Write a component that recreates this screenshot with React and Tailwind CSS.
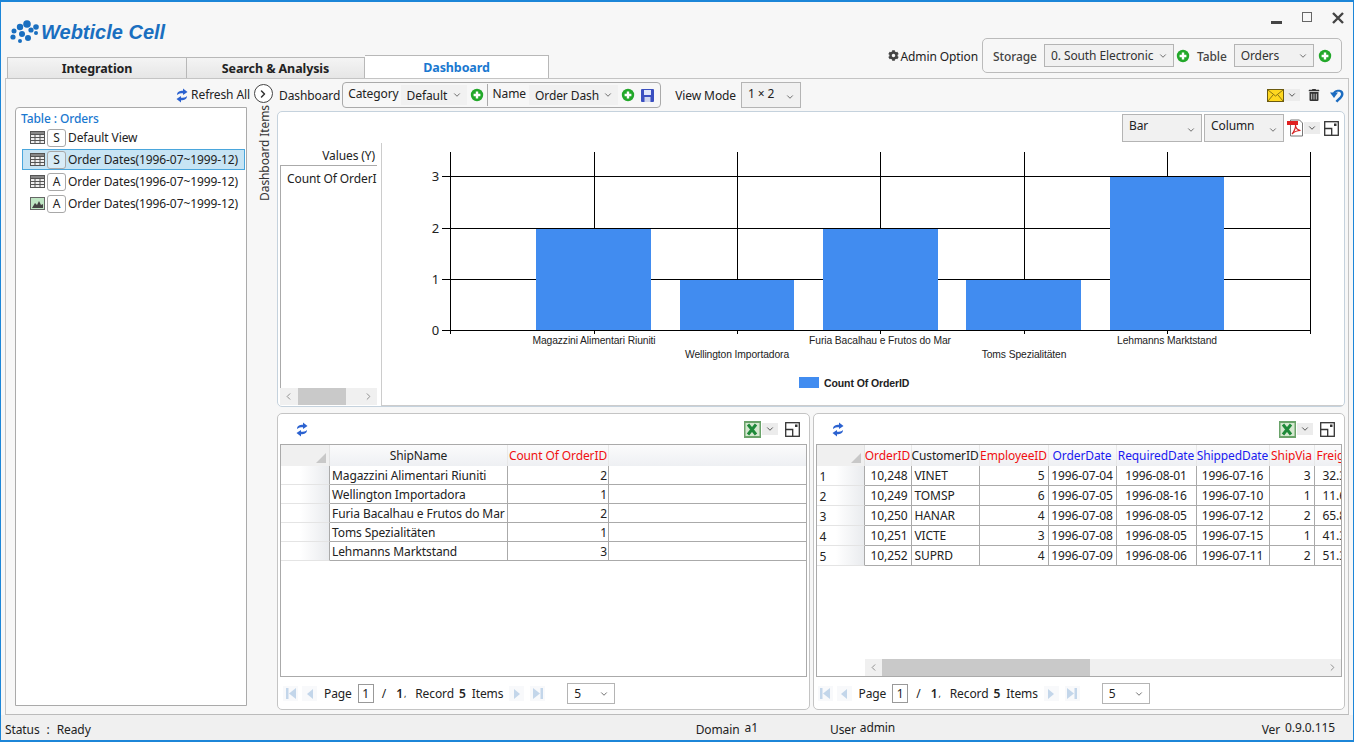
import React from "react";
import { FaCog, FaTrashAlt } from "react-icons/fa";
import { ChevronDown, ChevronRight, ChevronLeft } from "lucide-react";

const treeItems = [
    { icon: "table", badge: "S", label: "Default View" },
    { icon: "table", badge: "S", label: "Order Dates(1996-07~1999-12)", selected: true },
    { icon: "table", badge: "A", label: "Order Dates(1996-07~1999-12)" },
    { icon: "chart", badge: "A", label: "Order Dates(1996-07~1999-12)" },
];

const shipRows = [
    ["Magazzini Alimentari Riuniti", "2"],
    ["Wellington Importadora", "1"],
    ["Furia Bacalhau e Frutos do Mar", "2"],
    ["Toms Spezialitäten", "1"],
    ["Lehmanns Marktstand", "3"],
];

const orderRows = [
    ["1", "10,248", "VINET", "5", "1996-07-04", "1996-08-01", "1996-07-16", "3", "32.38"],
    ["2", "10,249", "TOMSP", "6", "1996-07-05", "1996-08-16", "1996-07-10", "1", "11.61"],
    ["3", "10,250", "HANAR", "4", "1996-07-08", "1996-08-05", "1996-07-12", "2", "65.83"],
    ["4", "10,251", "VICTE", "3", "1996-07-08", "1996-08-05", "1996-07-15", "1", "41.34"],
    ["5", "10,252", "SUPRD", "4", "1996-07-09", "1996-08-06", "1996-07-11", "2", "51.30"],
];

const orderCols = [
    { name: "OrderID", color: "text-[#f01010]" },
    { name: "CustomerID", color: "text-[#222]" },
    { name: "EmployeeID", color: "text-[#f01010]" },
    { name: "OrderDate", color: "text-[#1a1af0]" },
    { name: "RequiredDate", color: "text-[#1a1af0]" },
    { name: "ShippedDate", color: "text-[#1a1af0]" },
    { name: "ShipVia", color: "text-[#f01010]" },
];

const bars = [
    { x: 536, w: 115, y: 228, label: "Magazzini Alimentari Riuniti", cx: 594, ly: 344 },
    { x: 680, w: 114, y: 279, label: "Wellington Importadora", cx: 737, ly: 358 },
    { x: 823, w: 115, y: 228, label: "Furia Bacalhau e Frutos do Mar", cx: 880, ly: 344 },
    { x: 966, w: 115, y: 279, label: "Toms Spezialitäten", cx: 1024, ly: 358 },
    { x: 1110, w: 114, y: 176, label: "Lehmanns Marktstand", cx: 1167, ly: 344 },
];

function PlusIcon() {
    return (
        <svg width="14" height="14" viewBox="0 0 14 14" className="shrink-0">
            <circle cx="7" cy="7" r="6.2" fill="#22a82a" />
            <path d="M7 3.6v6.8M3.6 7h6.8" stroke="#fff" strokeWidth="2.4" />
        </svg>
    );
}

function Refresh() {
    return (
        <svg width="12" height="15" viewBox="0 0 12 15" className="shrink-0" fill="#2b62d0">
            <path d="M1 7C1 4 3.500 2.800 7 2.800V0.500L11.500 4 7 7V5.200C4.500 5.200 2.500 5.500 1 7z" />
            <path d="M11 8C11 11 8.500 12.200 5 12.200V14.500L0.500 11 5 8V9.800C7.500 9.800 9.500 9.500 11 8z" />
        </svg>
    );
}

function MaxIcon() {
    return (
        <svg width="15" height="15" viewBox="0 0 15 15" className="shrink-0" fill="none" stroke="#333" strokeWidth="1.300">
            <rect x="0.700" y="0.700" width="13.600" height="13.600" />
            <path d="M0.700 7.500h7v6.800M7.700 7.500" />
            <rect x="10" y="2.500" width="2.500" height="2.500" fill="#333" stroke="none" />
        </svg>
    );
}

function ExcelIcon() {
    return (
        <svg width="17" height="17" viewBox="0 0 17 17" className="shrink-0">
            <rect width="17" height="17" fill="#6aa36a" />
            <rect x="1.500" y="2" width="14" height="13" fill="#d5e8d0" />
            <path d="M4 3.500l8 10M12 3.500l-8 10" stroke="#1f8a3a" strokeWidth="3" />
        </svg>
    );
}

function PdfIcon() {
    return (
        <svg width="17" height="18" viewBox="0 0 17 18" className="shrink-0">
            <path d="M3.500 1h9l3 3v13h-12z" fill="#fff" stroke="#777" />
            <rect x="0" y="2" width="11" height="4" fill="#e02020" />
            <path d="M5 15c2-2 4-7 3.500-9 0 3 2 5 5 5.500-3 0-6 1-8.500 3.500z" fill="none" stroke="#d82020" strokeWidth="1.200" />
        </svg>
    );
}

function DropButton({ className }) {
    return (
        <div className={`flex items-center justify-center h-[12px] bg-[#ececec] ${className}`}>
            <ChevronDown size={10} strokeWidth={2.4} className="text-[#555]" />
        </div>
    );
}

function Select({ label, className, boxed, align }) {
    return (
        <div className={`flex justify-between shrink-0 pl-[6px] pr-[5px] bg-[#f1f1f1] ${align || "items-center"} ${boxed ? "border border-[#b4b4b4]" : ""} ${className}`}>
            <span className="pt-[1px]">{label}</span>
            <ChevronDown size={10} strokeWidth={2} className="text-[#555] self-center" />
        </div>
    );
}

function Badge({ children }) {
    return (
        <span className="flex items-center justify-center w-[19px] h-[18px] border border-[#a8a8a8] rounded-[3px] text-[12px] text-[#222] bg-white/30 shrink-0">
            {children}
        </span>
    );
}

function TreeIcon({ type }) {
    if (type === "chart") {
        return (
            <svg width="15" height="13" viewBox="0 0 15 13" className="shrink-0">
                <rect x="0.500" y="0.500" width="14" height="12" fill="#bfe6c4" stroke="#666" />
                <path d="M2 11l3-5 2 2 2-4 2 4 2-1v4z" fill="#444" />
            </svg>
        );
    }
    return (
        <svg width="15" height="13" viewBox="0 0 15 13" className="shrink-0" fill="none" stroke="#555">
            <rect x="0.500" y="0.500" width="14" height="12" fill="#eee" />
            <rect x="0.500" y="0.500" width="14" height="3" fill="#888" />
            <path d="M0.500 6.500h14M0.500 9.500h14M5 3.500v9M10 3.500v9" />
        </svg>
    );
}

function Pager({ offsetClass }) {
    const faint = "flex items-center justify-center w-[15px] h-[15px] bg-[#f8f9fb]";
    return (
        <div className={`flex items-center h-[32px] shrink-0 pt-[1px] ${offsetClass}`}>
            <span className={faint}>
                <svg width="10" height="11" viewBox="0 0 10 11" fill="#c3d6ea"><rect width="2.500" height="11" /><path d="M10 0v11L3 5.500z" /></svg>
            </span>
            <span className={`${faint} ml-[4px]`}>
                <svg width="6" height="10" viewBox="0 0 6 10" fill="#c3d6ea"><path d="M6 0v10L0 5z" /></svg>
            </span>
            <span className="ml-[7px]">Page</span>
            <span className="ml-[6px] flex items-center justify-center w-[16px] h-[19px] border border-[#999] bg-white">1</span>
            <span className="ml-[8px]">/</span>
            <span className="ml-[10px] font-semibold">1</span>
            <span className="ml-[1px] text-[9px]">,</span>
            <span className="ml-[9px]">Record</span>
            <span className="ml-[5px] font-semibold">5</span>
            <span className="ml-[6px]">Items</span>
            <span className={`${faint} ml-[6px]`}>
                <svg width="6" height="10" viewBox="0 0 6 10" fill="#c3d6ea"><path d="M0 0v10L6 5z" /></svg>
            </span>
            <span className={`${faint} ml-[6px]`}>
                <svg width="10" height="11" viewBox="0 0 10 11" fill="#c3d6ea"><path d="M0 0v11l7-5.500z" /><rect x="7.500" width="2.500" height="11" /></svg>
            </span>
            <Select label="5" boxed className="ml-[22px] w-[48px] h-[21px] bg-white" />
        </div>
    );
}

function Corner() {
    return (
        <div className="relative bg-[#f0f0f0] border-r border-[#e2e2e2]">
            <svg width="10" height="10" viewBox="0 0 10 10" className="absolute right-[3px] bottom-[3px]">
                <path d="M10 0v10H0z" fill="#c8c8c8" />
            </svg>
        </div>
    );
}

function RowHead({ children }) {
    return (
        <div className="flex items-center pt-[2px] border-b border-[#e4e4e4] bg-gradient-to-r from-white via-white via-40% to-[#e9ebee] pl-[3px] border-r border-r-[#aaa] text-[#222]">
            {children}
        </div>
    );
}

function HScroll({ className, thumb, leftBtn }) {
    return (
        <div className={`flex items-center shrink-0 bg-[#f0f0f0] text-[#888] ${className}`}>
            <ChevronLeft size={11} className={leftBtn} />
            <div className={`h-full bg-[#c9c9c9] ${thumb}`} />
            <div className="flex-1" />
            <ChevronRight size={11} className="mr-[3px]" />
        </div>
    );
}

function ShipGrid() {
    return (
        <div className="relative flex-1 mx-[2px] border border-[#aaa] bg-white overflow-hidden">
            <div className="grid grid-cols-[49px_178px_101px_1fr] h-[21px] bg-gradient-to-b from-[#fbfbfc] to-[#eef0f3]">
                <Corner />
                <div className="flex items-center justify-center border-r border-[#e8e8e8]">ShipName</div>
                <div className="flex items-center justify-center whitespace-nowrap border-r border-[#e8e8e8] text-[#f01010]">Count Of OrderID</div>
                <div />
            </div>
            {shipRows.map((row) => (
                <div key={row[0]} className="grid grid-cols-[49px_178px_101px_1fr] h-[19px]">
                    <RowHead />
                    <div className="flex items-center pl-[2px] pt-[2px] whitespace-nowrap border-r border-b border-[#aaa]">{row[0]}</div>
                    <div className="flex items-center justify-end pr-[1px] pt-[2px] border-r border-b border-[#aaa]">{row[1]}</div>
                    <div className="border-b border-[#aaa]" />
                </div>
            ))}
        </div>
    );
}

function OrderGrid() {
    const cols = "grid grid-cols-[48px_47px_68px_69px_68px_80px_73px_45px_60px]";
    return (
        <div className="relative flex-1 mx-[2px] border border-[#aaa] bg-white overflow-hidden flex flex-col">
            <div className={`${cols} h-[21px] shrink-0 bg-gradient-to-b from-[#fbfbfc] to-[#eef0f3]`}>
                <Corner />
                {orderCols.map((c) => (
                    <div key={c.name} className={`flex items-center justify-center whitespace-nowrap border-r border-[#e8e8e8] ${c.color}`}>{c.name}</div>
                ))}
                <div className="flex items-center pl-[2px] whitespace-nowrap text-[#f01010]">Freight</div>
            </div>
            {orderRows.map((row) => (
                <div key={row[0]} className={`${cols} h-[20px] shrink-0`}>
                    <RowHead>{row[0]}</RowHead>
                    <div className="flex items-center justify-end pr-[3px] border-r border-b border-[#aaa]">{row[1]}</div>
                    <div className="flex items-center pl-[3px] border-r border-b border-[#aaa]">{row[2]}</div>
                    <div className="flex items-center justify-end pr-[3px] border-r border-b border-[#aaa]">{row[3]}</div>
                    <div className="flex items-center justify-center whitespace-nowrap border-r border-b border-[#aaa]">{row[4]}</div>
                    <div className="flex items-center justify-center whitespace-nowrap border-r border-b border-[#aaa]">{row[5]}</div>
                    <div className="flex items-center justify-center whitespace-nowrap border-r border-b border-[#aaa]">{row[6]}</div>
                    <div className="flex items-center justify-end pr-[3px] border-r border-b border-[#aaa]">{row[7]}</div>
                    <div className="flex items-center pl-[8px] whitespace-nowrap border-b border-[#aaa]">{row[8]}</div>
                </div>
            ))}
            <div className="flex-1" />
            <HScroll className="ml-[48px] h-[17px]" leftBtn="ml-[3px] mr-[3px]" thumb="w-[208px]" />
        </div>
    );
}

function GridPanel({ children, pagerOffset }) {
    return (
        <div className="flex-1 min-w-0 flex flex-col rounded-[5px] border border-[#c4c4c4] bg-white">
            <div className="flex items-center h-[30px] shrink-0 pl-[18px] pr-[9px]">
                <Refresh />
                <div className="flex-1" />
                <ExcelIcon />
                <DropButton className="w-[16px] ml-[1px]" />
                <div className="ml-[7px]"><MaxIcon /></div>
            </div>
            {children}
            <Pager offsetClass={pagerOffset} />
        </div>
    );
}

function Chart() {
    const chartFont = { fontFamily: "'Liberation Sans Narrow','Liberation Sans',sans-serif" };
    return (
        <svg width="962" height="262" viewBox="382 143 962 262" className="block">
            {[450, 594, 737, 880, 1024, 1167, 1310].map((x) => (
                <line key={x} x1={x + 0.5} x2={x + 0.5} y1="152" y2="334" stroke="#000" />
            ))}
            {[[176, "3"], [228, "2"], [279, "1"], [330, "0"]].map(([y, t]) => (
                <g key={t}>
                    <line x1="442" x2="1310" y1={y + 0.5} y2={y + 0.5} stroke="#000" />
                    <text x="439" y={y + 5} textAnchor="end" fontSize="13" fill="#222" fontFamily="Noto Sans">{t}</text>
                </g>
            ))}
            {bars.map((b) => (
                <g key={b.label}>
                    <rect x={b.x} y={b.y + 1} width={b.w} height={330 - b.y - 1} fill="#418cf0" />
                    <text x={b.cx} y={b.ly} textAnchor="middle" fontSize="10.300" fill="#222" style={chartFont}>{b.label}</text>
                </g>
            ))}
            <line x1="442" x2="1310" y1="330.500" y2="330.500" stroke="#000" />
            <rect x="799" y="377" width="20" height="11" fill="#418cf0" />
            <text x="824" y="387" fontSize="10.500" fontWeight="700" fill="#222" style={{ fontFamily: "'Liberation Sans',sans-serif" }}>Count Of OrderID</text>
        </svg>
    );
}

export default function App() {
    return (
        <div className="w-[1354px] h-[742px] flex flex-col overflow-hidden bg-[#f7f7f7] border-2 border-[#1c86d8] border-l-[1px] border-r-[1px] border-b-[2px] text-[12px] leading-none tracking-[-0.1px] text-[#222] font-['Noto_Sans','Liberation_Sans',sans-serif]">
            {/* Title area */}
            <div className="relative flex h-[52px] shrink-0">
                <div className="flex items-center h-[30px] mt-[15px] ml-[8px]">
                    <svg width="34" height="26" viewBox="0 0 34 26" className="shrink-0" fill="#1a6fc0">
                        <circle cx="11" cy="8" r="3.200" />
                        <circle cx="18" cy="5" r="3.800" />
                        <circle cx="5" cy="12" r="2.500" />
                        <circle cx="4" cy="18" r="2.600" />
                        <circle cx="13" cy="15" r="3" />
                        <circle cx="22" cy="11" r="2.600" />
                        <circle cx="27" cy="8" r="2.800" />
                        <circle cx="27" cy="14" r="2" />
                        <circle cx="19" cy="19" r="3" />
                        <circle cx="11" cy="22" r="2" />
                    </svg>
                    <span className="-ml-[2px] font-['Liberation_Sans'] font-bold italic text-[20px] tracking-normal text-[#1a6fc0] whitespace-nowrap">Webticle Cell</span>
                </div>
                <div className="flex-1" />
                <div className="flex items-start pt-[10px] pr-[9px] gap-[20px]">
                    <div className="w-[11px] h-[3px] bg-[#444] mt-[9px]" />
                    <div className="w-[10px] h-[10px] border border-[#666]" />
                    <svg width="12" height="12" viewBox="0 0 12 12" stroke="#444" strokeWidth="2.400"><path d="M1 1l10 10M11 1L1 11" /></svg>
                </div>
                <div className="absolute right-[11px] top-[36px] flex items-center">
                    <FaCog size={11} className="text-[#444] mr-[1px]" />
                    <span className="text-[#222] pt-[2px]">Admin Option</span>
                    <div className="ml-[4px] flex items-center w-[360px] h-[35px] border border-[#bbb] rounded-[5px] pl-[10px]">
                        <span className="w-[44px] text-[#444] font-medium whitespace-nowrap pt-[2px]">Storage</span>
                        <Select boxed label="0. South Electronic" className="ml-[7px] w-[130px] h-[23px] text-[#333]" />
                        <span className="ml-[2px]"><PlusIcon /></span>
                        <span className="ml-[7px] text-[#444] font-medium pt-[2px]">Table</span>
                        <Select boxed label="Orders" className="ml-[7px] w-[80px] h-[23px] text-[#333]" />
                        <span className="ml-[4px]"><PlusIcon /></span>
                    </div>
                </div>
            </div>

            {/* Tabs */}
            <div className="flex items-end h-[24px] shrink-0 pl-[6px] font-bold text-[12.500px]">
                <div className="flex items-center justify-center w-[180px] h-[21px] pt-[2px] border border-b-0 border-[#b8b8b8] bg-gradient-to-b from-[#f4f4f4] to-[#e6e6e6]">Integration</div>
                <div className="flex items-center justify-center w-[178px] h-[21px] pt-[2px] border border-l-0 border-b-0 border-[#b8b8b8] bg-gradient-to-b from-[#f4f4f4] to-[#e6e6e6]">Search &amp; Analysis</div>
                <div className="flex items-center justify-center w-[184px] h-[23px] pt-[2px] border border-b-0 border-l-0 border-[#b8b8b8] bg-white text-[#1a78d0]">Dashboard</div>
            </div>

            {/* Main */}
            <div className="flex flex-1 min-h-0 mx-[4px] border border-[#c4c4c4] border-b-[#bbb]">
                <div className="flex flex-col w-[241px] shrink-0 pl-[9px] pb-[8px]">
                    <div className="flex items-center justify-end h-[28px] pt-[4px] gap-[3px] -mr-[3px]">
                        <Refresh />
                        <span className="whitespace-nowrap">Refresh All</span>
                    </div>
                    <div className="flex-1 border border-[#aaa] bg-white pt-[3px] rounded-tl-[4px]">
                        <div className="pl-[5px] h-[15px] flex items-center font-medium text-[#1a78d0]">Table : Orders</div>
                        <div className="mt-[1px] flex flex-col gap-[1px]">
                            {treeItems.map((item, i) => (
                                <div key={i} className={`flex items-center h-[21px] ml-[6px] mr-[1px] gap-[2px] whitespace-nowrap ${item.selected ? "bg-[#c7e4f4] border border-[#4aa6dc] pl-[7px]" : "pl-[8px]"}`}>
                                    <TreeIcon type={item.icon} />
                                    <Badge>{item.badge}</Badge>
                                    <span>{item.label}</span>
                                </div>
                            ))}
                        </div>
                    </div>
                </div>

                <div className="flex flex-col items-center w-[30px] shrink-0 pt-[5px] pl-[2px]">
                    <div className="flex items-center justify-center w-[19px] h-[19px] rounded-full border-[1.500px] border-[#444] bg-white">
                        <ChevronRight size={12} strokeWidth={3} className="text-[#333]" />
                    </div>
                    <span className="mt-[2px] ml-[3px] [writing-mode:vertical-rl] rotate-180 text-[#333] whitespace-nowrap">Dashboard Items</span>
                </div>

                <div className="flex flex-col flex-1 min-w-0 pr-[3px] pb-[4px]">
                    {/* Toolbar */}
                    <div className="flex items-center h-[32px] shrink-0 pl-[2px] whitespace-nowrap">
                        <span className="pt-[2px]">Dashboard</span>
                        <div className="ml-[2px] flex items-center w-[319px] h-[26px] border border-[#aaa] rounded-[4px] pl-[5px]">
                            <span className="-mt-[3px]">Category</span>
                            <Select label="Default" className="ml-[2px] w-[66px] h-[20px]" />
                            <span className="ml-[3px]"><PlusIcon /></span>
                            <div className="ml-[3px] w-[1px] h-[22px] bg-[#aaa]" />
                            <span className="ml-[5px] -mt-[3px]">Name</span>
                            <Select label="Order Dash" className="ml-[3px] w-[89px] h-[20px]" />
                            <span className="ml-[3px]"><PlusIcon /></span>
                            <svg width="13" height="13" viewBox="0 0 13 13" className="ml-[6px]">
                                <rect width="13" height="13" rx="1" fill="#3a4fc0" />
                                <rect x="3" y="1" width="7" height="5" fill="#dfe6fa" />
                                <rect x="3.500" y="8" width="6" height="5" fill="#cfd6ee" />
                            </svg>
                        </div>
                        <span className="ml-[14px] pt-[2px]">View Mode</span>
                        <Select boxed align="items-start" label="1 × 2" className="ml-[5px] w-[60px] h-[26px] pt-[4px]" />
                        <div className="flex-1" />
                        <svg width="17" height="13" viewBox="0 0 17 13" className="shrink-0">
                            <rect x="0.500" y="0.500" width="16" height="12" fill="#ffd81f" stroke="#6b5a10" />
                            <path d="M1 1l7.500 6L16 1M1 12l5-6M16 12l-5-6" fill="none" stroke="#8a7410" />
                        </svg>
                        <DropButton className="w-[16px]" />
                        <FaTrashAlt size={12} className="ml-[8px] text-[#333]" />
                        <svg width="14" height="15" viewBox="0 0 14 15" className="ml-[10px] mr-[1px]" fill="#1c6cc0">
                            <path d="M3 5.500C3 1.500 13.500 -0.500 13.500 6 13.500 9.500 9.500 12 7.500 14.500L5.500 13C7.500 10.500 11 8.500 11 6 11 2.800 5.500 3.500 5.500 5.500z" />
                            <path d="M0 4.500h8L4 10z" />
                        </svg>
                    </div>

                    {/* Chart panel */}
                    <div className="flex flex-col h-[296px] shrink-0 rounded-[5px] border border-[#c5d2dd] bg-white">
                        <div className="flex h-[31px] shrink-0 pt-[2px] pr-[5px] justify-end">
                            <Select boxed align="items-start" label="Bar" className="w-[80px] h-[28px] pt-[4px]" />
                            <Select boxed align="items-start" label="Column" className="ml-[2px] w-[80px] h-[28px] pt-[4px]" />
                            <div className="ml-[3px] flex items-center h-[28px]">
                                <PdfIcon />
                                <DropButton className="w-[16px]" />
                                <div className="ml-[4px]"><MaxIcon /></div>
                            </div>
                        </div>
                        <div className="flex flex-1 min-h-0">
                            <div className="flex flex-col w-[103px] shrink-0 pl-[2px] pb-[1px]">
                                <div className="flex items-center justify-end h-[22px] pt-[3px] pr-[2px] whitespace-nowrap w-[97px]">Values (Y)</div>
                                <div className="w-[97px] flex-1 border-t border-l border-[#aaa] pt-[7px] pl-[6px] overflow-hidden whitespace-nowrap">Count Of OrderID</div>
                                <HScroll className="w-[97px] h-[17px]" leftBtn="ml-[3px] mr-[4px]" thumb="w-[48px]" />
                            </div>
                            <div className="flex-1 min-w-0 border-l border-b border-[#ccc] overflow-hidden mr-[1px]">
                                <Chart />
                            </div>
                        </div>
                    </div>

                    {/* Grids */}
                    <div className="flex flex-1 min-h-0 gap-[3px] mt-[6px]">
                        <GridPanel pagerOffset="pl-[5px]">
                            <ShipGrid />
                        </GridPanel>
                        <GridPanel pagerOffset="pl-[4px]">
                            <OrderGrid />
                        </GridPanel>
                    </div>
                </div>
            </div>

            {/* Status bar */}
            <div className="flex items-center h-[25px] shrink-0 pt-[4px] bg-[#f0f0f0] pl-[4px] whitespace-nowrap">
                <span>Status</span>
                <span className="ml-[7px]">:</span>
                <span className="ml-[7px]">Ready</span>
                <span className="ml-[605px]">Domain</span>
                <span className="ml-[5px] -mt-[3px]">a1</span>
                <span className="ml-[72px]">User</span>
                <span className="ml-[4px] -mt-[3px]">admin</span>
                <div className="flex-1" />
                <span>Ver</span>
                <span className="ml-[5px] mr-[18px] -mt-[3px]">0.9.0.115</span>
            </div>
        </div>
    );
}
